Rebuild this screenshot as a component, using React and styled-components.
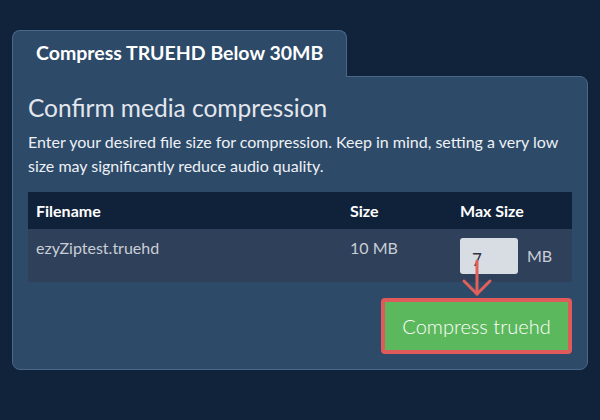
import styled, { createGlobalStyle } from 'styled-components'

const GlobalStyle = createGlobalStyle`
  html, body {
    margin: 0;
    padding: 0;
    background: #10233a;
    font-family: Lato, "Open Sans", sans-serif;
  }
`

const Page = styled.div`
  width: 600px;
  height: 420px;
  box-sizing: border-box;
  padding: 30px 12px 0 12px;
`

const Tab = styled.div`
  position: relative;
  z-index: 1;
  display: inline-block;
  box-sizing: border-box;
  height: 47px;
  margin-bottom: -1px;
  padding: 0 23px;
  background: #2d4a69;
  border: 1px solid #4a678a;
  border-bottom: none;
  border-radius: 8px 8px 0 0;
  color: #ffffff;
  font-size: 19.5px;
  font-weight: 700;
  line-height: 44px;
`

const Panel = styled.div`
  box-sizing: border-box;
  background: #2d4a69;
  border: 1px solid #4a678a;
  border-radius: 0 8px 8px 8px;
  padding: 15px 15px 15px 15px;
`

const Heading = styled.h2`
  margin: 0;
  color: #e3e7ed;
  font-size: 24.5px;
  font-weight: 400;
  line-height: 32px;
`

const Description = styled.p`
  margin: 6px 0 14px 0;
  color: #eef1f5;
  font-size: 16px;
  line-height: 24px;
`

const Body = styled.div`
  position: relative;
  display: flex;
  flex-direction: column;
`

const Table = styled.table`
  width: 100%;
  table-layout: fixed;
  border-collapse: collapse;
  font-size: 16px;
`

const HeadCell = styled.th`
  background: #10223a;
  color: #ffffff;
  font-weight: 700;
  text-align: left;
  height: 37px;
  padding: 0 8px;
  width: ${p => p.$width || 'auto'};
`

const Cell = styled.td`
  background: #2f405a;
  color: #c9ced6;
  vertical-align: top;
  padding: 9px 8px 8px 8px;
  line-height: 20px;
`

const SizeField = styled.div`
  display: flex;
  align-items: center;
  gap: 9px;
`

const SizeInput = styled.input`
  box-sizing: border-box;
  width: 58px;
  height: 36px;
  border: none;
  border-radius: 3px;
  background: #d8dce3;
  color: #2b3440;
  font-family: Lato, sans-serif;
  font-size: 17px;
  padding: 6px 0 0 12px;
  outline: none;
`

const Unit = styled.span`
  color: #c9ced6;
  font-size: 16px;
`

const Actions = styled.div`
  display: flex;
  justify-content: flex-end;
  margin-top: 16px;
`

const CompressButton = styled.button`
  box-sizing: border-box;
  width: 191px;
  height: 56px;
  border: 4px solid #e05a5c;
  border-radius: 4px;
  background: #5cb85c;
  color: #ffffff;
  font-family: Lato, sans-serif;
  font-size: 20px;
  font-weight: 300;
  cursor: pointer;
`

const Arrow = styled.svg`
  position: absolute;
  left: 434px;
  top: 69px;
  overflow: visible;
`

export default function App() {
  return (
    <>
      <GlobalStyle />
      <Page>
        <Tab>Compress TRUEHD Below 30MB</Tab>
        <Panel>
          <Heading>Confirm media compression</Heading>
          <Description>
            Enter your desired file size for compression. Keep in mind, setting a very low
            size may significantly reduce audio quality.
          </Description>
          <Body>
            <Table>
              <thead>
                <tr>
                  <HeadCell $width="298px">Filename</HeadCell>
                  <HeadCell $width="94px">Size</HeadCell>
                  <HeadCell>Max Size</HeadCell>
                </tr>
              </thead>
              <tbody>
                <tr>
                  <Cell>ezyZiptest.truehd</Cell>
                  <Cell>10 MB</Cell>
                  <Cell>
                    <SizeField>
                      <SizeInput defaultValue="7" />
                      <Unit>MB</Unit>
                    </SizeField>
                  </Cell>
                </tr>
              </tbody>
            </Table>
            <Actions>
              <CompressButton>Compress truehd</CompressButton>
            </Actions>
            <Arrow width="30" height="36" viewBox="0 0 30 36">
              <g fill="none" stroke="#e0605a" strokeWidth="3" strokeLinecap="round" strokeLinejoin="round">
                <line x1="15" y1="0" x2="15" y2="33" />
                <polyline points="2,20 15,33 28,20" />
              </g>
            </Arrow>
          </Body>
        </Panel>
      </Page>
    </>
  )
}
